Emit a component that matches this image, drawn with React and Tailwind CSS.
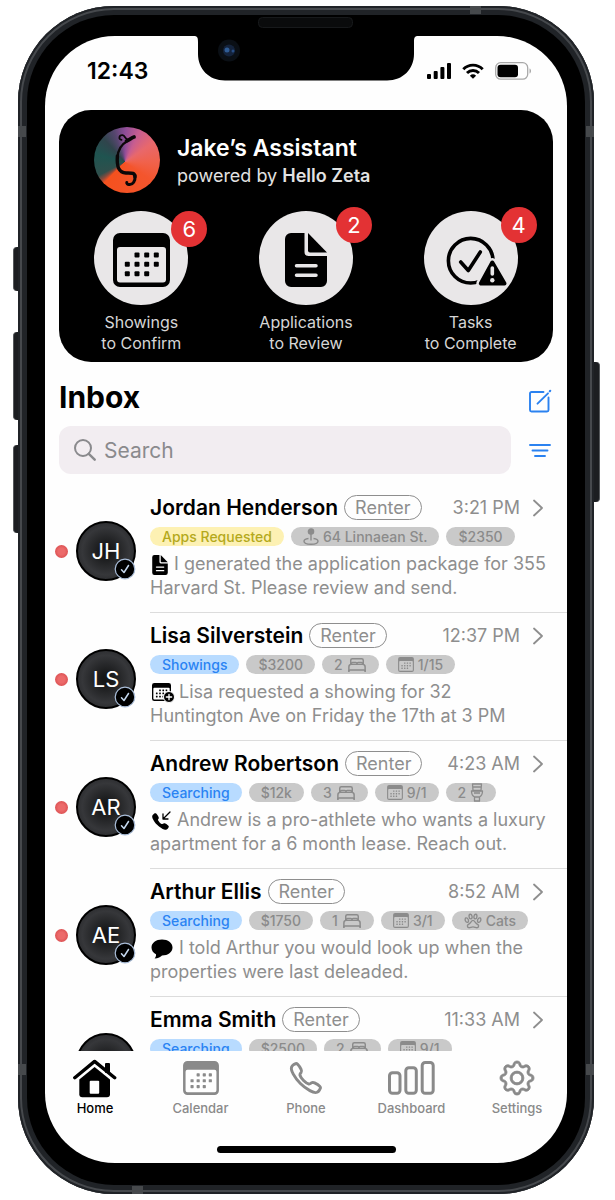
import React from "react";
import { IoBedOutline, IoCall, IoCallOutline, IoPawOutline } from "react-icons/io5";
import { BsGear } from "react-icons/bs";

function CalendarIcon({ className }) {
  const dots = [
    [24, 22], [33.7, 22], [43.3, 22],
    [14.3, 31.3], [24, 31.3], [33.7, 31.3], [43.3, 31.3],
    [14.3, 40.7], [24, 40.7], [33.7, 40.7],
  ];
  return (
    <svg viewBox="0 0 57 54" className={className} fill="currentColor" aria-hidden="true">
      <path
        fillRule="evenodd"
        d="M7 0H50a7 7 0 0 1 7 7V47a7 7 0 0 1-7 7H7a7 7 0 0 1-7-7V7a7 7 0 0 1 7-7ZM7 14a3 3 0 0 0-3 3V46.500a3 3 0 0 0 3 3H50a3 3 0 0 0 3-3V17a3 3 0 0 0-3-3Z"
      />
      {dots.map(([x, y]) => (
        <rect key={`${x}-${y}`} x={x - 2.5} y={y - 2.5} width="5" height="5" rx="1" />
      ))}
    </svg>
  );
}

function DocumentIcon({ className, lines }) {
  return (
    <svg viewBox="0 0 42 54" className={className} fill="currentColor" aria-hidden="true">
      <path d="M6 0H19.500V19a4 4 0 0 0 4 4H42V48a6 6 0 0 1-6 6H6a6 6 0 0 1-6-6V6a6 6 0 0 1 6-6Z" />
      <path d="M23 0 42 19.500H25a2 2 0 0 1-2-2Z" />
      <path d="M11.500 32.700H31M11.500 42.300H31" stroke={lines} strokeWidth="3.500" strokeLinecap="round" />
    </svg>
  );
}

function TaskIcon({ className }) {
  return (
    <svg viewBox="0 0 94 94" className={className} fill="none" aria-hidden="true">
      <g transform="translate(22 25)" strokeLinecap="round" strokeLinejoin="round">
        <circle cx="24.700" cy="24.700" r="22.300" stroke="#000" strokeWidth="3.600" />
        <path d="M14.700 26 22.300 34.500 34.300 16" stroke="#000" strokeWidth="3.600" />
        <path d="M46.300 26.500 34.800 47.500H58.500Z" fill="#e9e7e8" stroke="#e9e7e8" strokeWidth="9" />
        <path d="M46.300 26.500 34.800 47.500H58.500Z" fill="#000" stroke="#000" strokeWidth="4" />
        <path d="M46.300 32V38" stroke="#e9e7e8" strokeWidth="3.600" />
        <circle cx="46.300" cy="44.300" r="2.200" fill="#e9e7e8" />
      </g>
    </svg>
  );
}

function CalendarAddIcon() {
  return (
    <span className="relative mr-1 ml-0.5 inline-block h-5 w-[23px] align-middle text-black">
      <CalendarIcon className="h-[18px] w-[19px]" />
      <svg viewBox="0 0 12 12" className="absolute right-0 bottom-0 size-3" aria-hidden="true">
        <circle cx="6" cy="6" r="5.500" fill="#000" stroke="#fff" strokeWidth="1" />
        <path d="M6 3.300V8.700M3.300 6H8.700" stroke="#fff" strokeWidth="1.300" strokeLinecap="round" />
      </svg>
    </span>
  );
}

function IncomingCallIcon() {
  return (
    <span className="relative mr-1.5 ml-px inline-block size-5 align-middle text-black">
      <IoCall className="absolute bottom-0 left-0 size-[19px]" aria-hidden="true" />
      <svg viewBox="0 0 10 10" className="absolute top-0 right-0 size-[10px]" fill="none" stroke="#000" strokeWidth="1.300" strokeLinecap="round" strokeLinejoin="round" aria-hidden="true">
        <path d="M9 1 2 8M2 3V8H7" />
      </svg>
    </span>
  );
}

function BubbleIcon() {
  return (
    <svg viewBox="0 0 22 20" className="mr-1.5 ml-px inline-block h-5 w-[22px] align-middle" aria-hidden="true">
      <path d="M11 0.500C17 0.500 21.500 4 21.500 8.500S17 16.500 11 16.500C9.800 18 7 19.500 3.600 19.500 4.700 18.400 5.200 17 5 15.300 2.200 13.900 0.500 11.400 0.500 8.500 0.500 4 5 0.500 11 0.500Z" />
    </svg>
  );
}

function PinIcon() {
  return (
    <svg viewBox="0 0 16 17" className="h-[17px] w-4" fill="none" stroke="currentColor" strokeWidth="1.400" aria-hidden="true">
      <circle cx="8" cy="3.500" r="2.600" fill="currentColor" />
      <path d="M8 6V12.500" />
      <path d="M5.500 10.500C2.800 10.900 1 11.900 1 13.200 1 15 4 16.200 8 16.200S15 15 15 13.200C15 11.900 13.200 10.900 10.500 10.500" />
    </svg>
  );
}

function ToiletIcon() {
  return (
    <svg viewBox="0 0 14 19" className="h-[19px] w-3.5" fill="none" stroke="currentColor" strokeWidth="1.300" strokeLinejoin="round" aria-hidden="true">
      <path d="M2.500 1H11.500L11 7.500H3ZM2.700 4H11.300" />
      <path d="M1.500 8H12.500C12.500 11.500 10.500 13.500 9.500 14V18H4.500V14C3.500 13.500 1.500 11.500 1.500 8ZM4 10H10M4.500 14H9.500M4 18H10" />
    </svg>
  );
}

function HomeIcon() {
  return (
    <svg viewBox="0 0 44 39" className="h-[39px] w-11" aria-hidden="true">
      <path d="M6.300 20.500 21.600 8 37 20.500V35.300a3 3 0 0 1-3 3H9.300a3 3 0 0 1-3-3Z" />
      <path d="M1.800 18.700 21.600 2.400 41.700 18.700" fill="none" stroke="#fff" strokeWidth="6" />
      <path d="M1.800 18.700 21.600 2.400 41.700 18.700" fill="none" stroke="#000" strokeWidth="3.400" strokeLinecap="round" strokeLinejoin="round" />
      <rect x="32" y="4" width="5" height="10" rx="1" />
      <rect x="16.700" y="21.700" width="9.500" height="13" rx="1" fill="#fff" />
    </svg>
  );
}

function BarsIcon() {
  return (
    <svg viewBox="0 0 47 34" className="h-[34px] w-[47px]" fill="none" stroke="currentColor" strokeWidth="3" aria-hidden="true">
      <rect x="1.500" y="11.800" width="10.500" height="20.500" rx="3" />
      <rect x="17.800" y="6.800" width="10.500" height="25.500" rx="3" />
      <rect x="34.200" y="1.500" width="11" height="30.800" rx="3" />
    </svg>
  );
}

function ZetaLogo() {
  return (
    <div className="size-[66px] shrink-0 rounded-full bg-[conic-gradient(from_0deg_at_47%_53%,#8e4d98_0deg,#c75d90_25deg,#e8686c_55deg,#f0624c_90deg,#f4552d_125deg,#f4511e_225deg,#8a4a3c_233deg,#2f4f4c_243deg,#1f5450_285deg,#30444c_318deg,#55466e_340deg,#8e4d98_360deg)]">
      <svg viewBox="0 0 66 66" className="size-full" fill="none" stroke="#0b0708" strokeLinecap="round" aria-hidden="true">
        <path d="M27.500 12.800C24.300 12.500 24.800 8 28.500 8.200 31.500 8.600 31 12.500 34 12.500" strokeWidth="1.800" />
        <path d="M32.500 14C35 13.500 37.500 10.500 40 10" strokeWidth="3.800" />
        <path d="M33.500 14C27 17.500 23.700 23.500 23.400 31" strokeWidth="2.400" />
        <path d="M23.400 29C22.500 40 25 45.500 32 46 37.500 46 41 45.500 41 50" strokeWidth="3.400" />
        <path d="M41 48.500C41.500 54 39 58 35 57.500 33.500 57.300 32.500 56.500 32.800 55.500" strokeWidth="3" />
      </svg>
    </div>
  );
}

function Notch() {
  return (
    <svg viewBox="0 0 224 72" className="absolute -top-[27px] left-1/2 h-[72px] w-56 -translate-x-1/2" aria-hidden="true">
      <path d="M0 20V27C3.500 27 4 29 4 33V45C4 60 15 71.500 31 71.500H193C209 71.500 220 60 220 45V33C220 29 220.500 27 224 27V20Z" fill="#000" />
      <rect x="64.500" y="8.500" width="94" height="10" rx="4" fill="#0a0b0c" stroke="#17191b" />
      <circle cx="35" cy="41.500" r="11" fill="#0a0f15" />
      <circle cx="35" cy="41.500" r="6" fill="#14233c" />
      <circle cx="33" cy="41" r="2.500" fill="#2f5c95" />
      <circle cx="39" cy="42" r="1.500" fill="#274e86" />
    </svg>
  );
}

function StatusBar() {
  return (
    <div className="mb-1 flex h-[70px] items-center justify-between pr-[35px] pl-[42px]">
      <span className="text-[23px] leading-6 font-semibold">12:43</span>
      <div className="flex items-center gap-[11px]">
        <svg viewBox="0 0 24 16" className="h-4 w-6" aria-hidden="true">
          <rect x="0" y="11" width="4" height="5" rx="1" />
          <rect x="6.700" y="8" width="4" height="8" rx="1" />
          <rect x="13.400" y="4" width="4" height="12" rx="1" />
          <rect x="20" y="0" width="4" height="16" rx="1" />
        </svg>
        <svg viewBox="0 0 22 16" className="h-4 w-[22px]" fill="none" stroke="#000" strokeWidth="2.900" aria-hidden="true">
          <path d="M1.300 6.200A13.600 13.600 0 0 1 20.700 6.200" />
          <path d="M5 10A8.500 8.500 0 0 1 17 10" />
          <path d="M7.900 12.700A4.600 4.600 0 0 1 14.100 12.700L11 15.800Z" fill="#000" stroke="none" />
        </svg>
        <svg viewBox="0 0 37 18" className="h-[18px] w-[37px]" fill="none" aria-hidden="true">
          <rect x="0.700" y="0.700" width="32" height="16.500" rx="5" stroke="#a8a8a8" strokeWidth="1.300" />
          <rect x="2.500" y="2.700" width="20.500" height="12.500" rx="3" fill="#000" />
          <path d="M34.500 6.500C36.500 7 36.500 11 34.500 11.500Z" fill="#a8a8a8" />
        </svg>
      </div>
    </div>
  );
}

const shortcuts = [
  { lines: ["Showings", "to Confirm"], count: 6, icon: <CalendarIcon className="mt-[3px] h-[54px] w-[57px]" />, badge: "top-0" },
  { lines: ["Applications", "to Review"], count: 2, icon: <DocumentIcon className="mt-[3px] h-[54px] w-[42px]" lines="#e9e7e8" />, badge: "-top-1" },
  { lines: ["Tasks", "to Complete"], count: 4, icon: <TaskIcon className="size-full" />, badge: "-top-1" },
];

function AssistantCard() {
  return (
    <section className="mx-3.5 rounded-[32px] bg-black pt-[17px] pb-2 text-white">
      <div className="flex items-center gap-[17px] pl-[35px]">
        <ZetaLogo />
        <div className="pt-[3px]">
          <h2 className="text-[23px] leading-7 font-semibold">Jake’s Assistant</h2>
          <p className="text-[18px] leading-7 text-[#e2e2e2]">
            powered by <strong className="font-semibold">Hello Zeta</strong>
          </p>
        </div>
      </div>
      <div className="mt-[18px] grid grid-cols-3">
        {shortcuts.map((s) => (
          <button key={s.count} type="button" className="flex flex-col items-center gap-[7px]">
            <span className="relative flex size-[94px] items-center justify-center rounded-full bg-[#e9e7e8] text-black">
              {s.icon}
              <span className={`absolute left-[77px] flex size-9 items-center justify-center rounded-full bg-[#e33234] text-[22px] leading-6 text-white ${s.badge}`}>
                {s.count}
              </span>
            </span>
            <span className="text-[16px] leading-[21px] text-[#d6d6d6]">
              {s.lines[0]}
              <br />
              {s.lines[1]}
            </span>
          </button>
        ))}
      </div>
    </section>
  );
}

function InboxHeader() {
  return (
    <div className="pt-[17px] pr-[15px] pl-3.5">
      <div className="flex items-center justify-between">
        <h1 className="text-[30px] leading-9 font-bold">Inbox</h1>
        <button type="button" aria-label="Compose" className="pt-2 text-[#2b82f0]">
          <svg viewBox="0 0 24 24" className="size-6" fill="none" stroke="currentColor" strokeWidth="1.900" strokeLinecap="round" strokeLinejoin="round" aria-hidden="true">
            <path d="M15.500 3H3.500A1.500 1.500 0 0 0 2 4.500V21A1.500 1.500 0 0 0 3.500 22.500H19A1.500 1.500 0 0 0 20.500 21V8.500" />
            <path d="M9.500 14.700 20 4.300" />
            <path d="M21.800 2.200 22.200 1.800" strokeWidth="2.200" />
          </svg>
        </button>
      </div>
      <div className="mt-[11px] flex items-center justify-between gap-[17px]">
        <label className="flex h-12 min-w-0 flex-1 items-center gap-2 rounded-xl bg-[#f2edf1] pl-[15px] text-[#8a8a8d]">
          <svg viewBox="0 0 22 22" className="size-[22px] shrink-0" fill="none" stroke="currentColor" strokeWidth="2" strokeLinecap="round" aria-hidden="true">
            <circle cx="9" cy="9" r="8" />
            <path d="M14.800 14.800 20.700 20.700" strokeWidth="2.400" />
          </svg>
          <input type="search" aria-label="Search" placeholder="Search" className="min-w-0 flex-1 bg-transparent pt-0.5 text-[21px] leading-7 outline-none placeholder:text-[#8a8a8d]" />
        </label>
        <button type="button" aria-label="Filter" className="text-[#2b82f0]">
          <svg viewBox="0 0 24 16" className="h-4 w-6" stroke="currentColor" strokeWidth="1.900" strokeLinecap="round" aria-hidden="true">
            <path d="M2 3H22M4.500 8.500H19.500M7 14H17" />
          </svg>
        </button>
      </div>
    </div>
  );
}

const bed = <IoBedOutline className="size-5 [&_path]:[stroke-width:38px]" aria-hidden="true" />;
const cal = <CalendarIcon className="h-[15px] w-4" />;

const threads = [
  {
    name: "Jordan Henderson", initials: "JH", time: "3:21 PM",
    status: { text: "Apps Requested", tone: "bg-[#fdf1b3] text-[#b4a91c]" },
    tags: [{ before: <PinIcon />, text: "64 Linnaean St." }, { text: "$2350" }],
    icon: <DocumentIcon className="mr-1.5 ml-0.5 inline-block h-5 w-4 align-middle text-black" lines="#fff" />,
    message: ["I generated the application package for 355", "Harvard St. Please review and send."],
  },
  {
    name: "Lisa Silverstein", initials: "LS", time: "12:37 PM",
    status: { text: "Showings", tone: "bg-[#b8dbff] text-[#2a83f3]" },
    tags: [{ text: "$3200" }, { text: "2", after: bed }, { before: cal, text: "1/15" }],
    icon: <CalendarAddIcon />,
    message: ["Lisa requested a showing for 32", "Huntington Ave on Friday the 17th at 3 PM"],
  },
  {
    name: "Andrew Robertson", initials: "AR", time: "4:23 AM",
    status: { text: "Searching", tone: "bg-[#b8dbff] text-[#2a83f3]" },
    tags: [{ text: "$12k" }, { text: "3", after: bed }, { before: cal, text: "9/1" }, { text: "2", after: <ToiletIcon /> }],
    icon: <IncomingCallIcon />,
    message: ["Andrew is a pro-athlete who wants a luxury", "apartment for a 6 month lease. Reach out."],
  },
  {
    name: "Arthur Ellis", initials: "AE", time: "8:52 AM",
    status: { text: "Searching", tone: "bg-[#b8dbff] text-[#2a83f3]" },
    tags: [{ text: "$1750" }, { text: "1", after: bed }, { before: cal, text: "3/1" }, { before: <IoPawOutline className="size-[18px] [&_path]:[stroke-width:38px]" aria-hidden="true" />, text: "Cats" }],
    icon: <BubbleIcon />,
    message: ["I told Arthur you would look up when the", "properties were last deleaded."],
  },
  {
    name: "Emma Smith", initials: "ES", time: "11:33 AM",
    status: { text: "Searching", tone: "bg-[#b8dbff] text-[#2a83f3]" },
    tags: [{ text: "$2500" }, { text: "2", after: bed }, { before: cal, text: "9/1" }],
    icon: null,
    message: [],
  },
];

function Thread({ thread }) {
  return (
    <li>
      <a href="#thread" className="flex h-32">
        <span className="flex w-[105px] shrink-0 items-center gap-2 pt-1 pl-[10px]">
          <span className="size-[13px] rounded-full bg-[radial-gradient(circle,#ec6a6a_35%,#d94d4f_80%)]" />
          <span className="relative flex size-[60px] items-center justify-center rounded-full border-2 border-black bg-[radial-gradient(circle,#151617_10%,#36373a_60%,#1c1d1f_100%)] text-[22px] leading-7 text-white">
            {thread.initials}
            <svg viewBox="0 0 22 22" className="absolute -right-0.5 -bottom-px size-[22px]" fill="none" strokeLinecap="round" strokeLinejoin="round" aria-hidden="true">
              <circle cx="11" cy="11" r="9.800" fill="#000" stroke="#a9bdd8" strokeWidth="1.200" />
              <path d="M7.500 11.700 10 14.500 14.500 7.500" stroke="#c5d8ee" strokeWidth="1.500" />
            </svg>
          </span>
        </span>
        <span className="flex min-w-0 flex-1 flex-col border-b border-[#dcdcdc] pt-[10px]">
          <span className="flex h-[25px] items-center pr-6 whitespace-nowrap">
            <span className="text-[21px] leading-6 font-semibold text-black">{thread.name}</span>
            <span className="ml-1.5 flex h-[25px] items-center rounded-full border border-[#8e8e8e] px-[10px] text-[18px] leading-5 text-[#8e8e8e]">
              Renter
            </span>
            <span className="ml-auto text-[18px] leading-6 text-[#8e8e8e]">{thread.time}</span>
            <svg viewBox="0 0 10 18" className="ml-[13px] h-[18px] w-[10px]" fill="none" stroke="#8e8e8e" strokeWidth="1.800" strokeLinecap="round" strokeLinejoin="round" aria-hidden="true">
              <path d="M1 1.500 9 9 1 16.500" />
            </svg>
          </span>
          <span className="mt-[7px] flex h-[19px] gap-[7px] text-[14px] leading-[19px] font-medium whitespace-nowrap">
            <span className={`rounded-full px-3 ${thread.status.tone}`}>{thread.status.text}</span>
            {thread.tags.map((tag) => (
              <span key={tag.text} className="flex items-center gap-1 rounded-full bg-[#c9c9c9] px-3 text-[#8b8b8b]">
                {tag.before}
                {tag.text}
                {tag.after}
              </span>
            ))}
          </span>
          <span className="mt-[6px] text-[18px] leading-6 whitespace-nowrap text-[#8e8e8e]">
            {thread.icon}
            {thread.message[0]}
            <br />
            {thread.message[1]}
          </span>
        </span>
      </a>
    </li>
  );
}

const tabs = [
  { label: "Home", icon: <HomeIcon />, tone: "text-black" },
  { label: "Calendar", icon: <CalendarIcon className="h-[34px] w-9" />, tone: "text-[#8a8a8a]" },
  { label: "Phone", icon: <IoCallOutline className="size-9 [&_path]:[stroke-width:42px]" aria-hidden="true" />, tone: "text-[#8a8a8a]" },
  { label: "Dashboard", icon: <BarsIcon />, tone: "text-[#8a8a8a]" },
  { label: "Settings", icon: <BsGear className="size-[34px] overflow-visible" strokeWidth="0.4" aria-hidden="true" />, tone: "text-[#8a8a8a]" },
];

function TabBar() {
  return (
    <nav className="flex justify-between px-[10px] pt-[7px]">
      {tabs.map((tab) => (
        <a key={tab.label} href="#tab" className={`flex w-20 flex-col items-center ${tab.tone}`}>
          <span className="flex h-10 items-center">{tab.icon}</span>
          <span className="text-[13px] leading-5 font-medium">{tab.label}</span>
        </a>
      ))}
    </nav>
  );
}

function FrameDetails() {
  return (
    <>
      <span className="absolute top-[241px] -left-[5px] h-11 w-[5px] rounded-l-sm border-l border-[#55585b] bg-[#1c1e21]" />
      <span className="absolute top-[326px] -left-[5px] h-[88px] w-[5px] rounded-l-sm border-l border-[#55585b] bg-[#1c1e21]" />
      <span className="absolute top-[439px] -left-[5px] h-[88px] w-[5px] rounded-l-sm border-l border-[#55585b] bg-[#1c1e21]" />
      <span className="absolute top-[356px] -right-[6px] h-[140px] w-[6px] rounded-r-sm border-r border-[#55585b] bg-[#1c1e21]" />
      <span className="absolute top-[120px] left-0 h-[11px] w-2 bg-[#46494c]" />
      <span className="absolute top-[120px] right-0 h-[11px] w-2 bg-[#46494c]" />
      <span className="absolute bottom-[119px] left-0 h-[11px] w-2 bg-[#46494c]" />
      <span className="absolute right-0 bottom-[119px] h-[11px] w-2 bg-[#46494c]" />
      <span className="absolute top-0 right-[113px] h-2 w-[11px] bg-[#46494c]" />
      <span className="absolute bottom-0 left-[114px] h-2 w-[11px] bg-[#46494c]" />
    </>
  );
}

export default function App() {
  return (
    <div className="flex h-screen bg-white pt-[6px] pr-[21px] pb-[6px] pl-[18px] font-['Inter',sans-serif] text-black">
      <div className="relative flex min-w-0 flex-1 rounded-[96px] bg-[#202327] p-[9px] shadow-[inset_0_0_0_2px_#202327,inset_0_0_0_4px_#46494d]">
        <FrameDetails />
        <div className="relative flex min-w-0 flex-1 rounded-[87px] bg-black px-[18px] pt-[21px] pb-[22px]">
          <div className="relative flex min-w-0 flex-1">
            <main className="flex min-w-0 flex-1 flex-col overflow-hidden rounded-[70px] bg-[#fefefe]">
              <StatusBar />
              <AssistantCard />
              <InboxHeader />
              <ul className="mt-[11px] min-h-0 flex-1 overflow-hidden">
                {threads.map((t) => (
                  <Thread key={t.initials} thread={t} />
                ))}
              </ul>
              <TabBar />
              <div className="mx-auto mt-7 mb-[10px] h-[7px] w-[179px] rounded-full bg-black" />
            </main>
            <Notch />
          </div>
        </div>
      </div>
    </div>
  );
}
